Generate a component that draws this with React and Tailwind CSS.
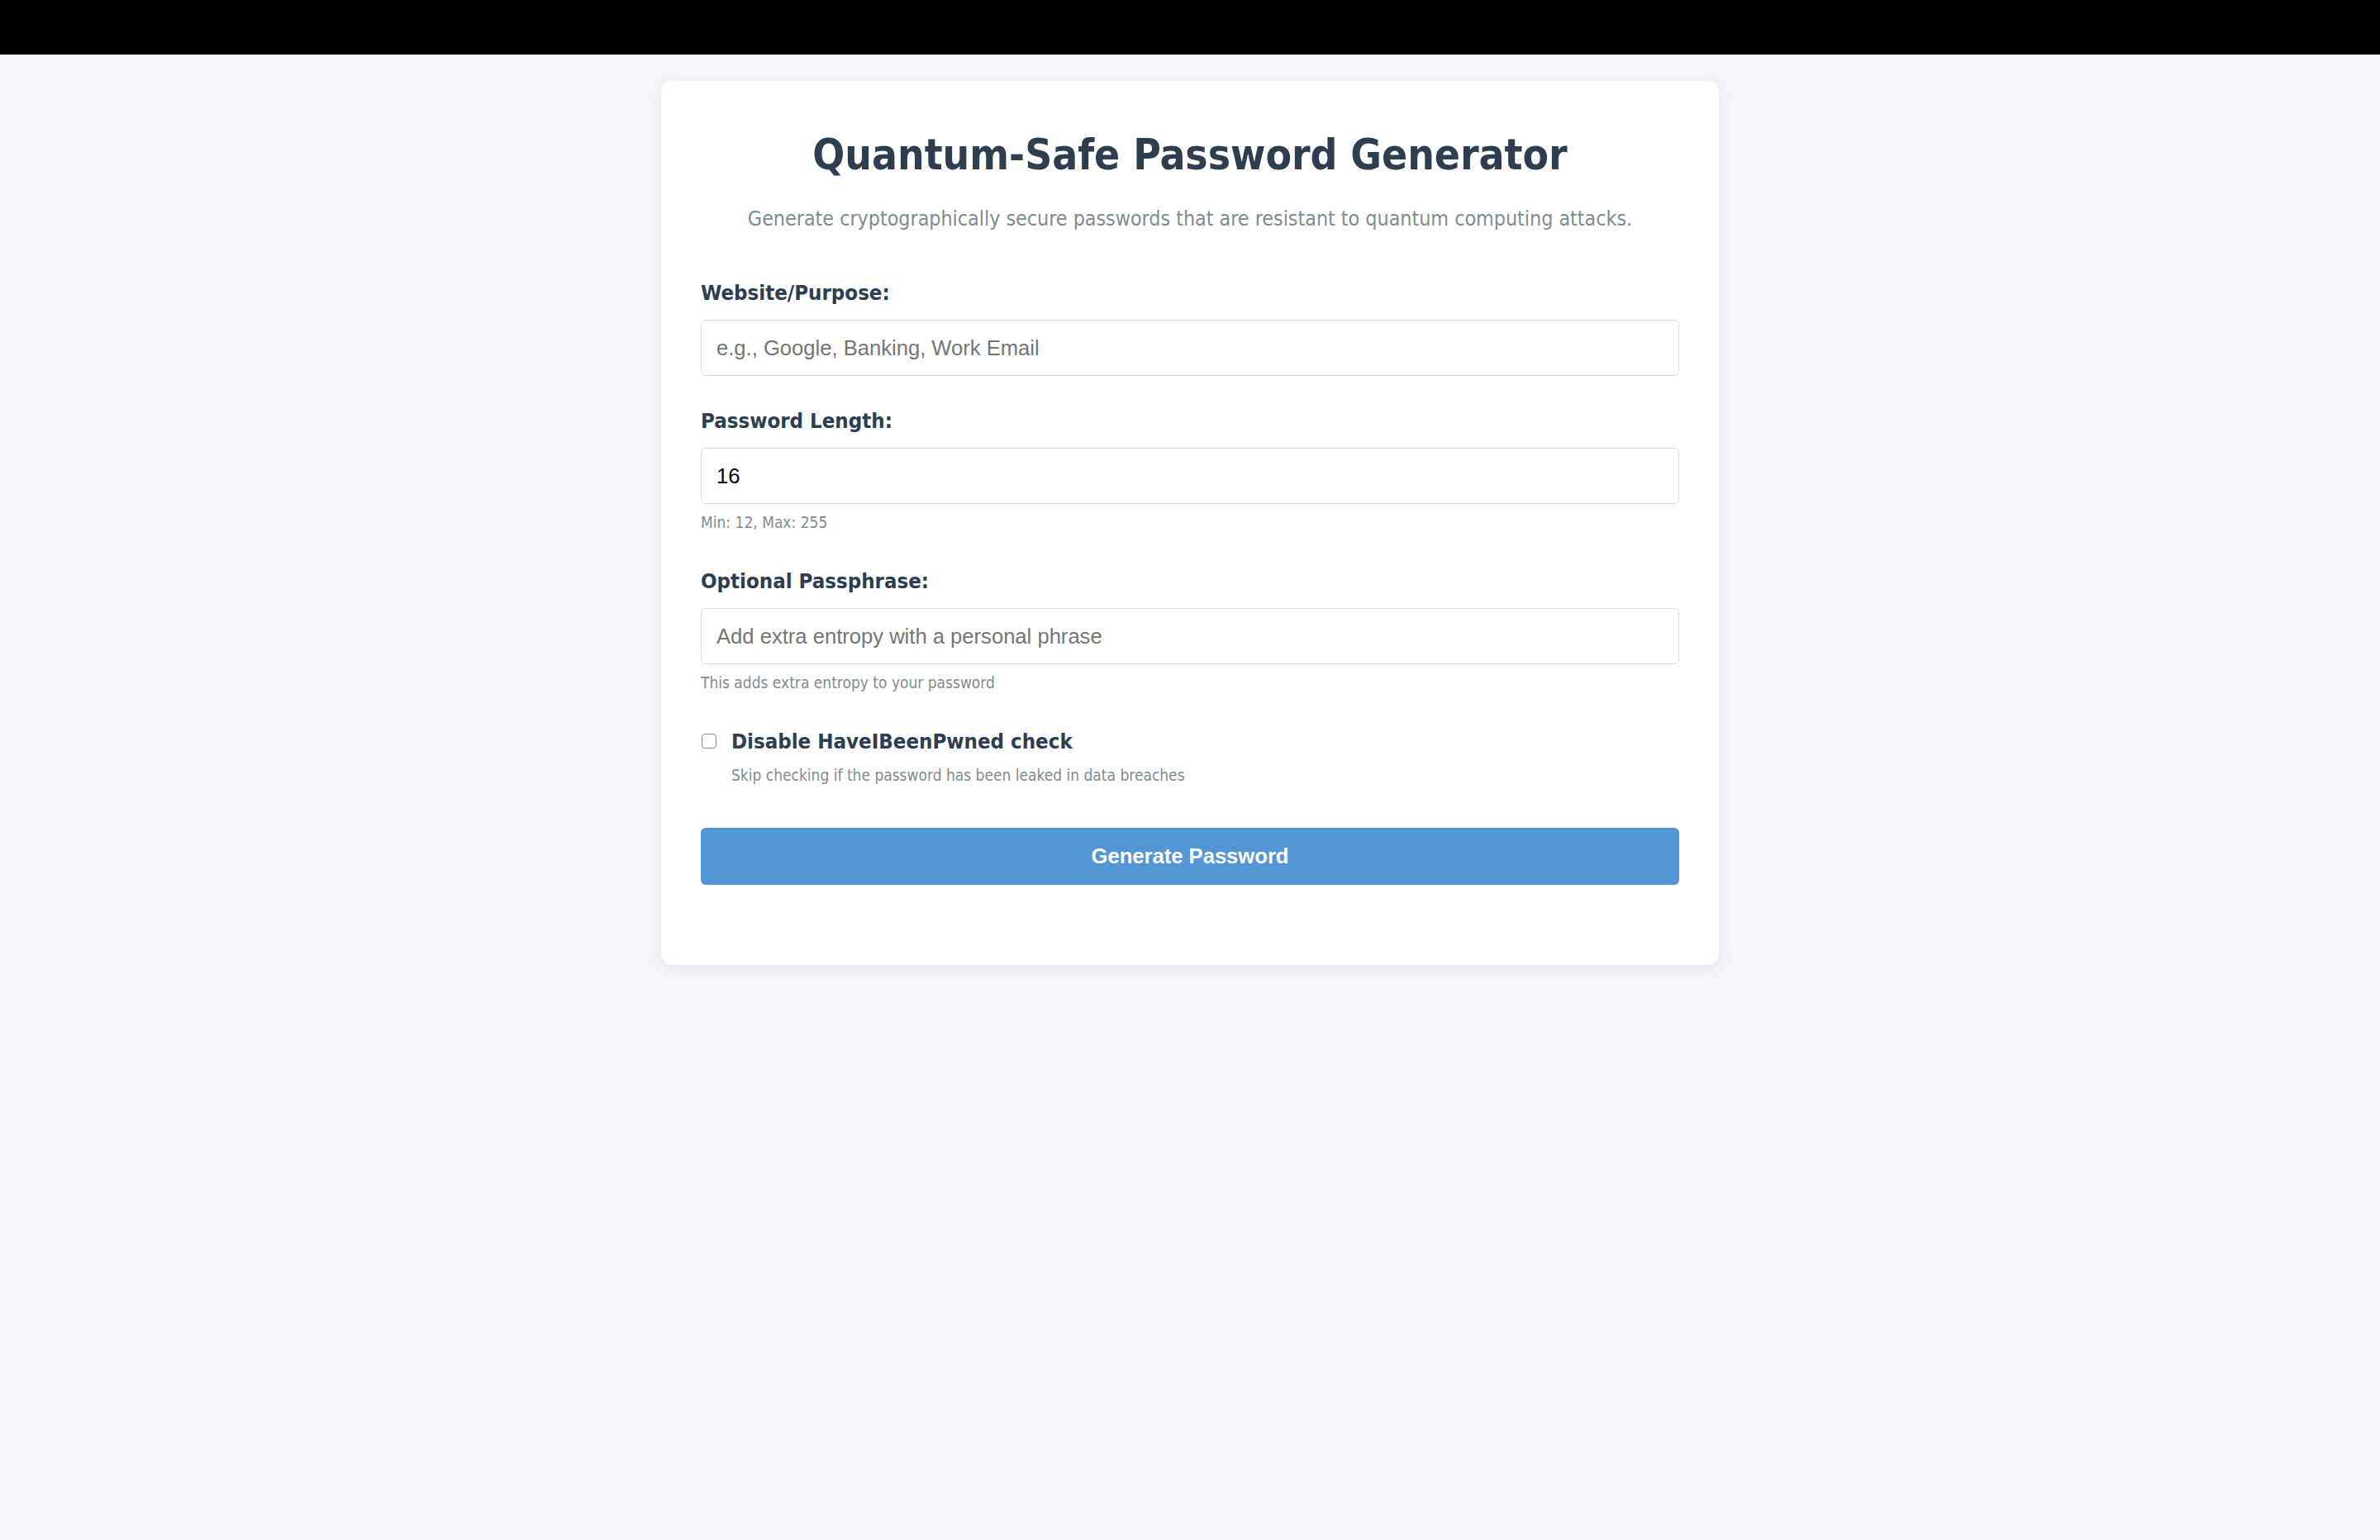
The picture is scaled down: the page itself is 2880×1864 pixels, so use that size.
import React, { useState } from 'react';

const Field = ({ label, placeholder, value, onChange, type = 'text', hint, className = '' }) => (
  <div className={className}>
    <label className="block text-[25.6px] leading-[32px] font-bold text-[#2c3e50]">{label}</label>
    <input
      type={type}
      value={value}
      onChange={onChange}
      placeholder={placeholder}
      className="mt-[17px] block w-full h-[68px] px-[18px] rounded-[6px] border border-[#dcdcdc] bg-white text-[25.6px] text-black font-['Liberation_Sans',Arial,sans-serif] placeholder:text-[#757575] focus:outline-none"
    />
    {hint && <p className="mt-[10px] text-[19px] leading-[24px] text-[#7f8c8d]">{hint}</p>}
  </div>
);

const App = () => {
  const [purpose, setPurpose] = useState('');
  const [length, setLength] = useState('16');
  const [phrase, setPhrase] = useState('');
  const [skipPwned, setSkipPwned] = useState(false);

  return (
    <div className="min-h-screen bg-[#f5f6fa] font-['DejaVu_Sans_Condensed','DejaVu_Sans',sans-serif]">
      {/* Top bar */}
      <div className="h-[66px] bg-black" />

      <div className="pt-[32px] pb-[40px]">
        {/* Card */}
        <div className="mx-auto w-[1280px] bg-white rounded-[13px] shadow-[0_4px_18px_rgba(0,0,0,0.08)] px-[48px] pt-[48px] pb-[97px]">
          <h1 className="mt-[11px] text-center text-[51px] leading-[62px] font-bold text-[#2c3e50]">
            Quantum-Safe Password Generator
          </h1>
          <p className="mt-[30px] text-center text-[24.8px] leading-[32px] text-[#7f8c8d]">
            Generate cryptographically secure passwords that are resistant to quantum computing attacks.
          </p>

          <Field
            className="mt-[57px]"
            label="Website/Purpose:"
            placeholder="e.g., Google, Banking, Work Email"
            value={purpose}
            onChange={(e) => setPurpose(e.target.value)}
          />

          <Field
            className="mt-[38px]"
            label="Password Length:"
            type="number"
            value={length}
            onChange={(e) => setLength(e.target.value)}
            hint="Min: 12, Max: 255"
          />

          <Field
            className="mt-[43px]"
            label="Optional Passphrase:"
            placeholder="Add extra entropy with a personal phrase"
            value={phrase}
            onChange={(e) => setPhrase(e.target.value)}
            hint="This adds extra entropy to your password"
          />

          {/* HIBP toggle */}
          <div className="mt-[43px]">
            <label className="flex items-center h-[32px] cursor-pointer">
              <input
                type="checkbox"
                checked={skipPwned}
                onChange={(e) => setSkipPwned(e.target.checked)}
                className="appearance-none ml-[1px] w-[18px] h-[18px] rounded-[4px] border border-[#8a8a8a] bg-white checked:bg-[#5296d5]"
              />
              <span className="ml-[18px] text-[25.6px] leading-[32px] font-bold text-[#2c3e50]">
                Disable HaveIBeenPwned check
              </span>
            </label>
            <p className="mt-[13px] pl-[37px] text-[19px] leading-[24px] text-[#7f8c8d]">
              Skip checking if the password has been leaked in data breaches
            </p>
          </div>

          <button
            type="button"
            className="mt-[52px] block w-full h-[69px] rounded-[6px] bg-[#5296d5] text-white text-[25.6px] font-bold font-['Liberation_Sans',Arial,sans-serif]"
          >
            Generate Password
          </button>
        </div>
      </div>
    </div>
  );
};

export default App;
